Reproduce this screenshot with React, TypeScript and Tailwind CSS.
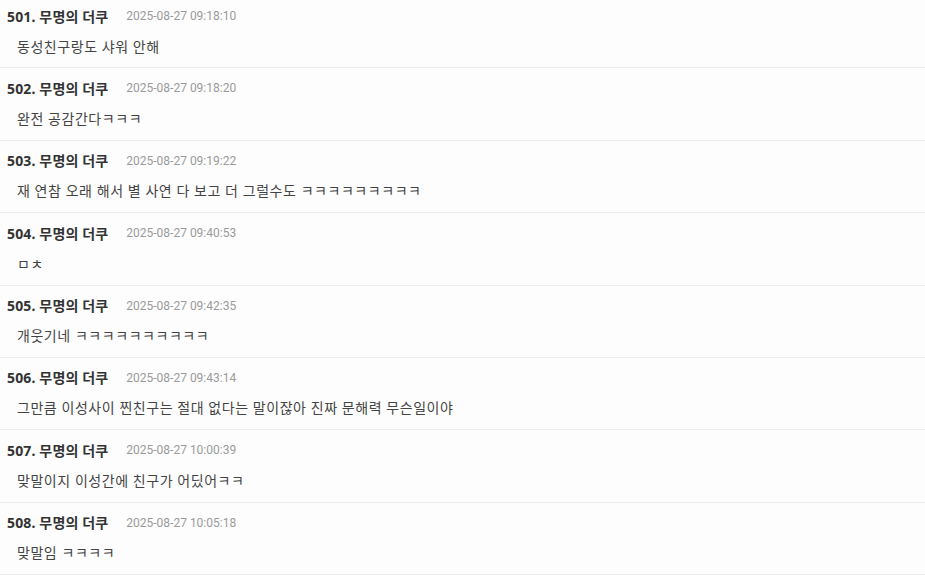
import React from 'react';

const comments = [
  { no: 501, time: '2025-08-27 09:18:10', text: '동성친구랑도 샤워 안해' },
  { no: 502, time: '2025-08-27 09:18:20', text: '완전 공감간다ㅋㅋㅋ' },
  { no: 503, time: '2025-08-27 09:19:22', text: '재 연참 오래 해서 별 사연 다 보고 더 그럴수도 ㅋㅋㅋㅋㅋㅋㅋㅋㅋ' },
  { no: 504, time: '2025-08-27 09:40:53', text: 'ㅁㅊ' },
  { no: 505, time: '2025-08-27 09:42:35', text: '개웃기네 ㅋㅋㅋㅋㅋㅋㅋㅋㅋㅋ' },
  { no: 506, time: '2025-08-27 09:43:14', text: '그만큼 이성사이 찐친구는 절대 없다는 말이잖아 진짜 문해력 무슨일이야' },
  { no: 507, time: '2025-08-27 10:00:39', text: '맞말이지 이성간에 친구가 어딨어ㅋㅋ' },
  { no: 508, time: '2025-08-27 10:05:18', text: '맞말임 ㅋㅋㅋㅋ' },
];

export default function App() {
  return (
    <div
      className="w-[925px] h-[575px] overflow-hidden bg-[#fdfdfd]"
      style={{ fontFamily: '"Noto Sans", "Noto Sans CJK KR", sans-serif' }}
    >
      <div className="-mt-[4px]">
        {comments.map((c) => (
          <div key={c.no} className="border-b border-[#ececec] pt-[10px] pb-[11.4px]">
            <div className="flex items-center h-[20px] pl-[7px]">
              <span className="text-[14px] font-bold text-[#333] tracking-[0.15px]">{c.no}. 무명의 더쿠</span>
              <span
                className="ml-[18px] text-[12px] text-[#9a9a9a]"
                style={{ fontFamily: 'Roboto, "Noto Sans", sans-serif' }}
              >
                {c.time}
              </span>
            </div>
            <div className="mt-[10px] h-[20px] pl-[17px] flex items-center text-[14px] text-[#444] tracking-[0.55px]">
              {c.text}
            </div>
          </div>
        ))}
      </div>
    </div>
  );
}
